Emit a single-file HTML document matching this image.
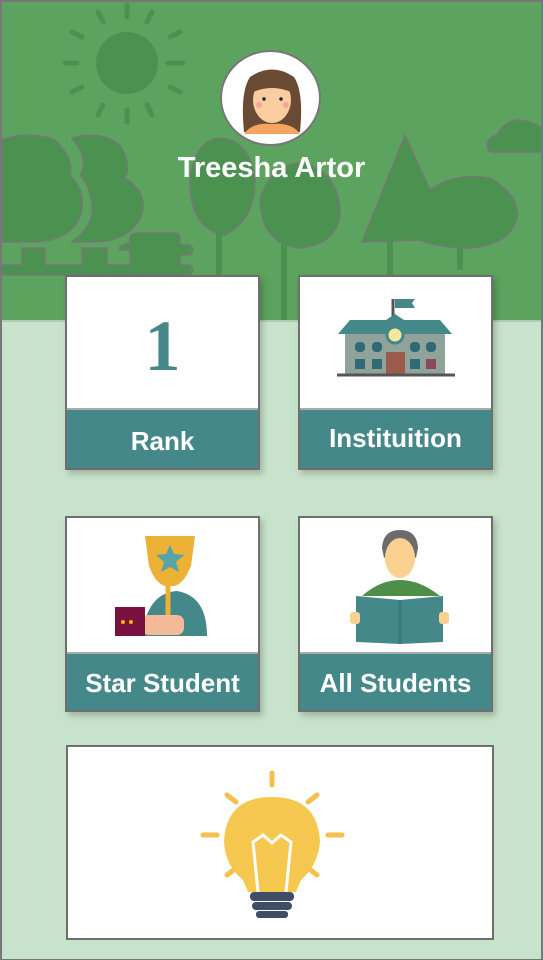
<!DOCTYPE html>
<html><head><meta charset="utf-8"><style>
*{margin:0;padding:0;box-sizing:border-box}
body{width:543px;height:960px;background:#c8e3cb;position:relative;overflow:hidden;font-family:"Liberation Sans",sans-serif}
.frame{position:absolute;left:0;top:0;width:543px;height:960px;border:2px solid #777;border-bottom-width:1px;pointer-events:none;z-index:10}
.card{position:absolute;background:#fff;border:2px solid #6f6f6f;box-shadow:3px 4px 6px rgba(0,0,0,.2)}
.lab{position:absolute;left:0;right:0;bottom:0;background:#45888a;border-top:2px solid #aaa;color:#fff;font-weight:bold;font-size:26px;text-align:center}
</style></head><body>
<svg width="543" height="320" style="position:absolute;left:0;top:0">
<rect width="543" height="320" fill="#5ca35f"/>
<g fill="#4b9150" stroke="#777" stroke-width="1.5">
<path d="M2 140 Q30 130 55 140 Q75 160 70 175 Q85 190 82 210 Q75 240 35 242 L2 242Z"/>
<path d="M72 138 Q100 130 120 145 Q132 165 125 178 Q145 190 143 210 Q135 240 95 242 L72 242 Q95 225 92 205 Q90 185 80 175 Q90 160 72 138Z"/>
<path d="M0 265 L22 265 L22 248 L45 248 L45 265 L82 265 L82 248 L107 248 L107 265 L130 265 L130 250 L120 250 Q117 245 130 243 L130 236 Q132 233 140 233 L175 233 Q180 233 180 238 L180 245 L190 245 Q195 250 190 255 L180 255 L180 265 L190 265 Q195 270 190 275 L0 275Z"/>
<path d="M190 180 Q195 140 220 138 Q250 140 255 180 Q255 220 225 235 Q190 230 190 180Z"/>
<path d="M260 200 Q270 165 300 163 Q340 170 340 215 Q335 245 300 248 Q262 245 260 200Z"/>
<path d="M405 135 L430 190 Q455 172 490 178 Q520 195 517 218 Q510 245 470 248 Q440 248 420 240 L362 242Z"/>
<path d="M488 150 Q485 138 497 135 Q505 120 520 120 Q535 122 545 130 L545 152 L492 152Z"/>
</g>
<circle cx="127" cy="63" r="31" fill="#4b9150"/>
<g stroke="#4b9150" stroke-width="5" stroke-linecap="round">
<path d="M127 5v12M127 110v12M65 63h12M168 63h15M98 12l5 10M152 12l-5 10M72 32l10 5M180 32l-10 5M72 92l10-5M180 92l-10-5M98 115l5-10M152 115l-5-10"/>
</g>
<g stroke="#4b9150" stroke-width="6"><path d="M219 150V320M284 195V320M203 190l15 10M237 205l-15 7M298 205l-14 8M265 218l18 10M390 240V275M460 245V270"/></g>
</svg>
<div style="position:absolute;left:0;top:320px;width:543px;height:2px;background:#888;opacity:.3"></div>
<div style="position:absolute;left:220px;top:50px;width:101px;height:96px;border-radius:50%;background:#fff;border:2px solid #777;overflow:hidden">
<svg width="101" height="96" viewBox="0 0 101 96"><path d="M22 80 Q18 40 28 25 Q50 10 72 25 Q82 40 78 80Z" fill="#6b4a35"/><ellipse cx="50" cy="48" rx="19" ry="23" fill="#f9cda0"/><path d="M31 40 Q32 20 50 20 Q68 20 69 40 Q50 32 31 40Z" fill="#6b4a35"/><circle cx="42" cy="47" r="1.7" fill="#222"/><circle cx="59" cy="47" r="1.7" fill="#222"/><circle cx="37" cy="53" r="3" fill="#f4a5a0"/><circle cx="64" cy="53" r="3" fill="#f4a5a0"/><path d="M22 82 Q30 70 50 72 Q70 70 78 82Z" fill="#f4a460"/></svg></div>
<div style="position:absolute;left:0;width:543px;top:152px;text-align:center;color:#fff;font-weight:bold;font-size:29px">Treesha Artor</div>

<div class="card" style="left:65px;top:275px;width:195px;height:195px">
<div style="position:absolute;left:0;right:0;top:28px;text-align:center;font-family:'Liberation Serif',serif;font-weight:bold;font-size:72px;color:#45888a">1</div>
<div class="lab" style="height:60px;line-height:62px">Rank</div></div>
<div class="card" style="left:298px;top:275px;width:195px;height:195px">
<svg width="191" height="134" style="position:absolute;left:0;top:0"><path d="M93 22V42" stroke="#555" stroke-width="3"/><path d="M95 22h20l-3 4 3 5h-20z" fill="#45888a"/><path d="M38 57 L50 43 H140 L152 57Z" fill="#45888a"/><rect x="45" y="57" width="100" height="40" fill="#8fa39a"/><path d="M65 57 L95 37 L125 57Z" fill="#45888a"/><circle cx="95" cy="58" r="8" fill="#f6e6a0" stroke="#45888a" stroke-width="3"/><rect x="86" y="75" width="19" height="22" fill="#9b5a4a"/><g fill="#2f6b75"><rect x="55" y="65" width="10" height="10" rx="4"/><rect x="72" y="65" width="10" height="10" rx="4"/><rect x="110" y="65" width="10" height="10" rx="4"/><rect x="126" y="65" width="10" height="10" rx="4"/><rect x="55" y="82" width="10" height="10"/><rect x="72" y="82" width="10" height="10"/><rect x="110" y="82" width="10" height="10"/></g><rect x="126" y="82" width="10" height="10" fill="#8a4a5a"/><path d="M37 98h118" stroke="#555" stroke-width="3"/></svg>
<div class="lab" style="height:60px;line-height:56px">Instituition</div></div>
<div class="card" style="left:65px;top:516px;width:195px;height:196px">
<svg width="191" height="134" style="position:absolute;left:0;top:0"><path d="M75 118 Q80 75 110 73 Q140 78 140 118Z" fill="#45888a"/><path d="M78 18h50l-4 30 Q115 70 103 68 Q90 70 82 48Z" fill="#edb135"/><path d="M101 68v30" stroke="#edb135" stroke-width="5"/><path d="M103 27l4 9 10 1-8 7 3 10-9-5-9 5 3-10-8-7 10-1z" fill="#57a4a8"/><rect x="75" y="97" width="42" height="20" rx="7" fill="#f4b999"/><rect x="48" y="89" width="30" height="29" fill="#7a1040"/><circle cx="56" cy="104" r="2" fill="#f3b900"/><circle cx="64" cy="104" r="2" fill="#f3b900"/></svg>
<div class="lab" style="height:58px;line-height:58px">Star Student</div></div>
<div class="card" style="left:298px;top:516px;width:195px;height:196px">
<svg width="191" height="134" style="position:absolute;left:0;top:0"><path d="M82 30 Q83 12 100 12 Q117 12 118 30 L116 40 Q100 30 84 40Z" fill="#6b6b6b"/><ellipse cx="100" cy="40" rx="15" ry="20" fill="#fbd191"/><path d="M62 78 Q80 62 100 62 Q120 62 140 78Z" fill="#4e8f47"/><path d="M56 78 L100 82 L143 78 L143 124 L100 126 L56 124Z" fill="#45888a"/><path d="M100 82v44" stroke="#3a7a7c" stroke-width="3"/><rect x="50" y="94" width="10" height="12" rx="3" fill="#fbd191"/><rect x="139" y="94" width="10" height="12" rx="3" fill="#fbd191"/></svg>
<div class="lab" style="height:58px;line-height:58px">All Students</div></div>
<div class="card" style="left:66px;top:745px;width:428px;height:195px;box-shadow:none">
<svg width="424" height="191" style="position:absolute;left:0;top:0"><g stroke="#f7c04a" stroke-width="5" stroke-linecap="round"><path d="M204 26v12M135 88h14M260 88h14M159 48l9 7M249 48l-9 7M159 128l9-7M249 128l-9-7"/></g><path d="M204 50 Q250 50 252 95 Q250 118 233 133 L228 145 H180 L175 133 Q157 118 156 95 Q158 50 204 50Z" fill="#f7c84f"/><path d="M190 145 L185 95 L195 88 L204 96 L213 88 L223 95 L218 145" fill="none" stroke="#fff" stroke-width="3"/><rect x="182" y="145" width="44" height="9" rx="4" fill="#3e4e66"/><rect x="184" y="155" width="40" height="8" rx="4" fill="#3e4e66"/><rect x="188" y="164" width="32" height="7" rx="3" fill="#3e4e66"/></svg></div>
<div class="frame"></div>
</body></html>
